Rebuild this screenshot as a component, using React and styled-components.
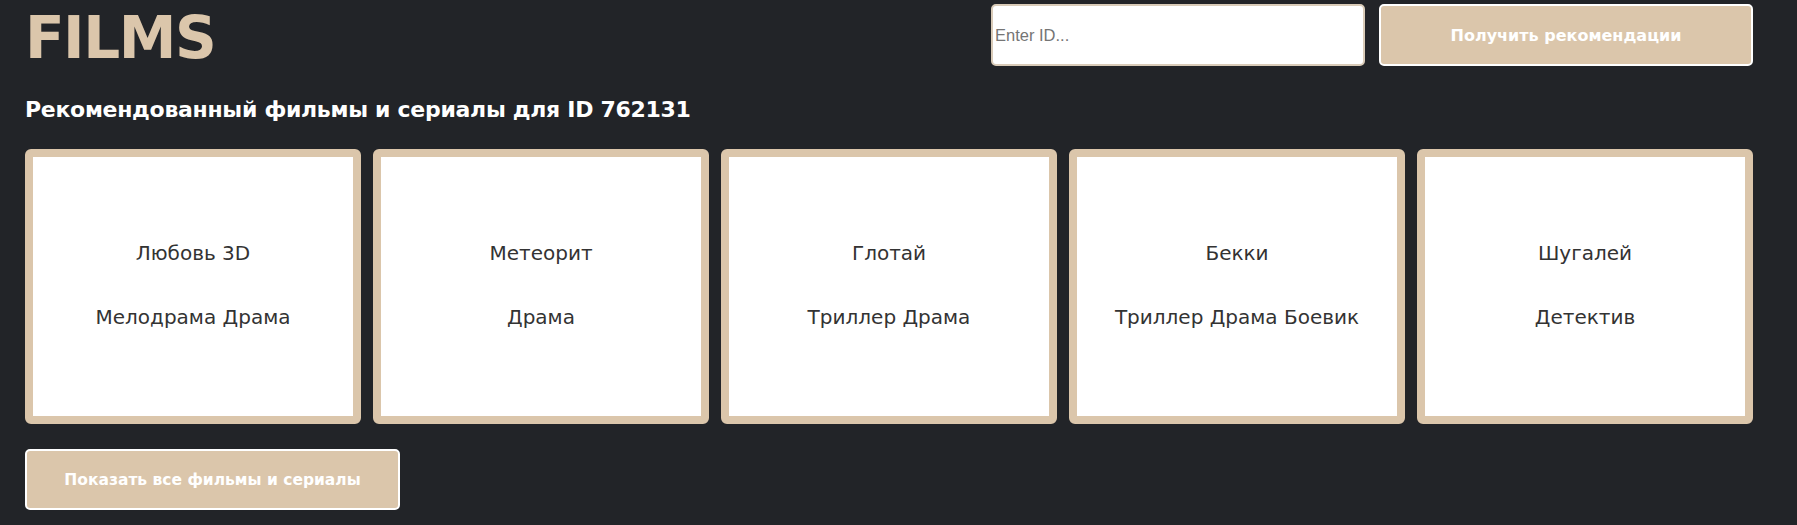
import React from 'react';
import styled, { createGlobalStyle } from 'styled-components';

const films = [
    { title: 'Любовь 3D', genres: 'Мелодрама Драма' },
    { title: 'Метеорит', genres: 'Драма' },
    { title: 'Глотай', genres: 'Триллер Драма' },
    { title: 'Бекки', genres: 'Триллер Драма Боевик' },
    { title: 'Шугалей', genres: 'Детектив' },
];

const App = () => {
    return (
        <>
            <GlobalStyle />
            <Page>
                <Header>
                    <Logo>FILMS</Logo>
                    <SearchForm onSubmit={(e) => e.preventDefault()}>
                        <IdInput type="text" placeholder="Enter ID..." />
                        <GetButton type="submit">Получить рекомендации</GetButton>
                    </SearchForm>
                </Header>
                <Subtitle>Рекомендованный фильмы и сериалы для ID 762131</Subtitle>
                <CardGrid>
                    {films.map((film) => (
                        <Card key={film.title}>
                            <CardText>{film.title}</CardText>
                            <CardText>{film.genres}</CardText>
                        </Card>
                    ))}
                </CardGrid>
                <ShowAllButton>Показать все фильмы и сериалы</ShowAllButton>
            </Page>
        </>
    );
};

const GlobalStyle = createGlobalStyle`
    html, body {
        margin: 0;
        padding: 0;
        background-color: #222428;
    }
    body {
        font-family: "DejaVu Sans", sans-serif;
    }
`;

const Page = styled.main`
    min-height: 525px;
    box-sizing: border-box;
    padding: 4px 44px 0 25px;
    background-color: #222428;
`;

const Header = styled.header`
    display: flex;
    justify-content: space-between;
    align-items: flex-start;
`;

const Logo = styled.h1`
    margin: 0;
    padding-top: 5px;
    font-size: 58px;
    line-height: 1;
    font-weight: 700;
    color: #dbc6ab;
    letter-spacing: -1.5px;
`;

const SearchForm = styled.form`
    display: flex;
    gap: 14px;
`;

const IdInput = styled.input`
    width: 374px;
    height: 62px;
    box-sizing: border-box;
    padding: 1px 2px;
    border: 2px solid #d9cbb8;
    border-radius: 5px;
    background: #fff;
    font-family: "Liberation Sans", Arial, sans-serif;
    font-size: 16.5px;
    color: #222;
    &::placeholder {
        color: #757575;
    }
    &:focus {
        outline: none;
    }
`;

const GetButton = styled.button`
    width: 374px;
    height: 62px;
    border: 2px solid #fff;
    border-radius: 5px;
    background-color: #dbc6ab;
    color: #fff;
    font-family: "DejaVu Sans", sans-serif;
    font-size: 16px;
    font-weight: 700;
    cursor: pointer;
`;

const Subtitle = styled.h2`
    margin: 30px 0 27px;
    font-size: 22px;
    font-weight: 700;
    color: #fff;
    letter-spacing: -0.3px;
`;

const CardGrid = styled.section`
    display: grid;
    grid-template-columns: repeat(5, 1fr);
    gap: 12px;
`;

const Card = styled.div`
    height: 275px;
    box-sizing: border-box;
    border: 8px solid #dbc6ab;
    border-radius: 6px;
    background: #fff;
    display: flex;
    flex-direction: column;
    align-items: center;
    justify-content: center;
    gap: 40px;
    padding-bottom: 3px;
`;

const CardText = styled.p`
    margin: 0;
    font-size: 20px;
    line-height: 24px;
    font-weight: 400;
    color: #333;
`;

const ShowAllButton = styled.button`
    display: block;
    margin-top: 25px;
    width: 375px;
    height: 61px;
    border: 2px solid #fff;
    border-radius: 5px;
    background-color: #dbc6ab;
    color: #fff;
    font-family: "DejaVu Sans", sans-serif;
    font-size: 15.5px;
    font-weight: 700;
    cursor: pointer;
`;

export default App;
